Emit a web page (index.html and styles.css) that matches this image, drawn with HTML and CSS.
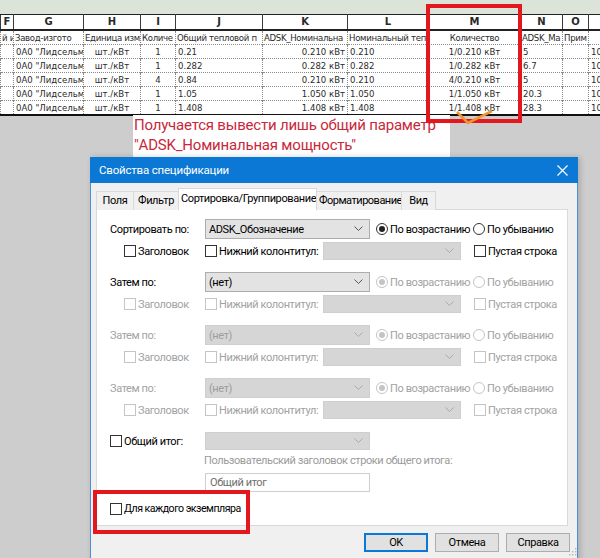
FILE: index.html
```html
<!DOCTYPE html>
<html lang="ru">
<head>
<meta charset="utf-8">
<title>Свойства спецификации</title>
<link rel="stylesheet" href="styles.css">
</head>
<body>
<div class="sheet">
  <div class="band"></div>
  <table class="sched">
    <colgroup>
      <col class="w13"><col class="w70"><col class="w57"><col class="w35"><col class="w87"><col class="w85"><col class="w81"><col class="w92"><col class="w42"><col class="w26"><col class="w12">
    </colgroup>
    <tr class="letters"><td>F</td><td>G</td><td>H</td><td>I</td><td>J</td><td>K</td><td>L</td><td>M</td><td>N</td><td>O</td><td></td></tr>
    <tr class="names"><td>й и</td><td>Завод-изгото</td><td>Единица изм</td><td>Количе</td><td>Общий тепловой п</td><td>ADSK_Номинальна</td><td>Номинальный теп</td><td class="c">Количество</td><td>ADSK_Ма</td><td>Прим</td><td></td></tr>
    <tr><td></td><td>0A0 "Лидсельм</td><td class="c">шт./кВт</td><td class="c">1</td><td>0.21</td><td class="r">0.210 кВт</td><td>0.210</td><td class="c">1/0.210 кВт</td><td>5</td><td></td><td>10</td></tr>
    <tr><td></td><td>0A0 "Лидсельм</td><td class="c">шт./кВт</td><td class="c">1</td><td>0.282</td><td class="r">0.282 кВт</td><td>0.282</td><td class="c">1/0.282 кВт</td><td>6.7</td><td></td><td>10</td></tr>
    <tr><td></td><td>0A0 "Лидсельм</td><td class="c">шт./кВт</td><td class="c">4</td><td>0.84</td><td class="r">0.210 кВт</td><td>0.210</td><td class="c">4/0.210 кВт</td><td>5</td><td></td><td>10</td></tr>
    <tr><td></td><td>0A0 "Лидсельм</td><td class="c">шт./кВт</td><td class="c">1</td><td>1.05</td><td class="r">1.050 кВт</td><td>1.050</td><td class="c">1/1.050 кВт</td><td>20.3</td><td></td><td>10</td></tr>
    <tr class="last"><td></td><td>0A0 "Лидсельм</td><td class="c">шт./кВт</td><td class="c">1</td><td>1.408</td><td class="r">1.408 кВт</td><td>1.408</td><td class="c">1/1.408 кВт</td><td>28.3</td><td></td><td>10</td></tr>
  </table>
</div>

<div class="note">Получается вывести лишь общий параметр<br>"ADSK_Номинальная мощность"</div>
<div class="hl hl-col"></div>
<svg class="tick" width="44" height="16" viewBox="0 0 44 16"><polyline points="2,2 13,13 37,1" fill="none" stroke="#f0952f" stroke-width="2.6"/></svg>

<div class="dialog">
  <div class="titlebar">
    <span class="title">Свойства спецификации</span>
    <svg class="close" width="11" height="11" viewBox="0 0 11 11"><path d="M0.5 0.5L10.5 10.5M10.5 0.5L0.5 10.5" stroke="#fff" stroke-width="1.2"/></svg>
  </div>
  <div class="tabs">
    <div class="tab">Поля</div>
    <div class="tab">Фильтр</div>
    <div class="tab active">Сортировка/Группирование</div>
    <div class="tab">Форматирование</div>
    <div class="tab">Вид</div>
  </div>
  <div class="panel">
    <div class="group">
      <div class="rowa">
        <span class="lbl">Сортировать по:</span>
        <div class="cb"><span>ADSK_Обозначение</span><svg class="chev" width="9" height="6" viewBox="0 0 9 6"><polyline points="0.5,0.5 4.5,4.5 8.5,0.5" fill="none" stroke="#555"/></svg></div>
        <span class="opt asc"><span class="radio on"></span>По возрастанию</span>
        <span class="opt"><span class="radio"></span>По убыванию</span>
      </div>
      <div class="rowb">
        <span class="opt hdr"><span class="chk"></span>Заголовок</span>
        <span class="opt ftr"><span class="chk"></span>Нижний колонтитул:</span>
        <div class="cb sm off"><span></span><svg class="chev" width="9" height="6" viewBox="0 0 9 6"><polyline points="0.5,0.5 4.5,4.5 8.5,0.5" fill="none" stroke="#aaa"/></svg></div>
        <span class="opt blank"><span class="chk"></span>Пустая строка</span>
      </div>
    </div>
    <div class="group">
      <div class="rowa">
        <span class="lbl">Затем по:</span>
        <div class="cb"><span>(нет)</span><svg class="chev" width="9" height="6" viewBox="0 0 9 6"><polyline points="0.5,0.5 4.5,4.5 8.5,0.5" fill="none" stroke="#555"/></svg></div>
        <span class="opt asc dis"><span class="radio on"></span>По возрастанию</span>
        <span class="opt dis"><span class="radio"></span>По убыванию</span>
      </div>
      <div class="rowb dis">
        <span class="opt hdr"><span class="chk"></span>Заголовок</span>
        <span class="opt ftr"><span class="chk"></span>Нижний колонтитул:</span>
        <div class="cb sm off"><span></span><svg class="chev" width="9" height="6" viewBox="0 0 9 6"><polyline points="0.5,0.5 4.5,4.5 8.5,0.5" fill="none" stroke="#aaa"/></svg></div>
        <span class="opt blank"><span class="chk"></span>Пустая строка</span>
      </div>
    </div>
    <div class="group">
      <div class="rowa dis">
        <span class="lbl">Затем по:</span>
        <div class="cb off"><span>(нет)</span><svg class="chev" width="9" height="6" viewBox="0 0 9 6"><polyline points="0.5,0.5 4.5,4.5 8.5,0.5" fill="none" stroke="#aaa"/></svg></div>
        <span class="opt asc"><span class="radio on"></span>По возрастанию</span>
        <span class="opt"><span class="radio"></span>По убыванию</span>
      </div>
      <div class="rowb dis">
        <span class="opt hdr"><span class="chk"></span>Заголовок</span>
        <span class="opt ftr"><span class="chk"></span>Нижний колонтитул:</span>
        <div class="cb sm off"><span></span><svg class="chev" width="9" height="6" viewBox="0 0 9 6"><polyline points="0.5,0.5 4.5,4.5 8.5,0.5" fill="none" stroke="#aaa"/></svg></div>
        <span class="opt blank"><span class="chk"></span>Пустая строка</span>
      </div>
    </div>
    <div class="group">
      <div class="rowa dis">
        <span class="lbl">Затем по:</span>
        <div class="cb off"><span>(нет)</span><svg class="chev" width="9" height="6" viewBox="0 0 9 6"><polyline points="0.5,0.5 4.5,4.5 8.5,0.5" fill="none" stroke="#aaa"/></svg></div>
        <span class="opt asc"><span class="radio on"></span>По возрастанию</span>
        <span class="opt"><span class="radio"></span>По убыванию</span>
      </div>
      <div class="rowb dis">
        <span class="opt hdr"><span class="chk"></span>Заголовок</span>
        <span class="opt ftr"><span class="chk"></span>Нижний колонтитул:</span>
        <div class="cb sm off"><span></span><svg class="chev" width="9" height="6" viewBox="0 0 9 6"><polyline points="0.5,0.5 4.5,4.5 8.5,0.5" fill="none" stroke="#aaa"/></svg></div>
        <span class="opt blank"><span class="chk"></span>Пустая строка</span>
      </div>
    </div>
    <div class="total">
      <span class="opt lbl"><span class="chk"></span>Общий итог:</span>
      <div class="cb sm off"><span></span><svg class="chev" width="9" height="6" viewBox="0 0 9 6"><polyline points="0.5,0.5 4.5,4.5 8.5,0.5" fill="none" stroke="#aaa"/></svg></div>
    </div>
    <div class="caption">Пользовательский заголовок строки общего итога:</div>
    <div class="inputrow"><div class="input">Общий итог</div></div>
    <div class="each"><span class="opt"><span class="chk"></span>Для каждого экземпляра</span></div>
  </div>
  <div class="buttons">
    <div class="btn default">OK</div>
    <div class="btn">Отмена</div>
    <div class="btn">Справка</div>
  </div>
  <svg class="grip" width="8" height="8" viewBox="0 0 8 8"><g fill="#b5b5b5"><rect x="6" y="0" width="1.4" height="1.4"/><rect x="3" y="3" width="1.4" height="1.4"/><rect x="6" y="3" width="1.4" height="1.4"/><rect x="0" y="6" width="1.4" height="1.4"/><rect x="3" y="6" width="1.4" height="1.4"/><rect x="6" y="6" width="1.4" height="1.4"/></g></svg>
</div>
<div class="hl hl-each"></div>
</body>
</html>
```
FILE: styles.css
```css
* { box-sizing: border-box; }
html, body { margin: 0; padding: 0; }
body {
  width: 600px;
  height: 558px;
  overflow: hidden;
  background: #cdcdcd;
  position: relative;
  font-family: Roboto, "Noto Sans", sans-serif;
}

/* ---------- schedule table ---------- */
.band { height: 14px; background: #dce3d8; }
.sched {
  border-collapse: collapse;
  table-layout: fixed;
  width: 600px;
  background: #fff;
  font-family: "DejaVu Sans Condensed", "DejaVu Sans", sans-serif;
  font-size: 9.5px;
  color: #2a2a2a;
}
.w13 { width: 13px; } .w70 { width: 70px; } .w57 { width: 57px; } .w35 { width: 35px; }
.w87 { width: 87px; } .w85 { width: 85px; } .w81 { width: 81px; } .w92 { width: 92px; }
.w42 { width: 42px; } .w26 { width: 26px; } .w12 { width: 12px; }
.sched td {
  height: 14px;
  padding: 0 2px;
  line-height: 13px;
  white-space: nowrap;
  overflow: hidden;
  border-left: 1px dotted #8a8a8a;
  border-top: 1px dotted #8a8a8a;
}
.sched tr.names td { letter-spacing: -0.3px; padding: 0 1px; }
.sched td.c { text-align: center; }
.sched td.r { text-align: right; }
.sched tr.letters td {
  height: 15px;
  font-family: "DejaVu Sans", sans-serif;
  font-weight: bold;
  font-size: 10px;
  text-align: center;
  border: 1px solid #3a3a3a;
  border-top: 1px solid #222;
  border-bottom: 2px solid #222;
}
.sched tr.last td { border-bottom: 2px solid #111; }

/* ---------- annotations ---------- */
.note {
  position: absolute;
  left: 133px;
  top: 115px;
  width: 317px;
  height: 44px;
  background: #fff;
  padding-left: 1px;
  color: #c8283a;
  font-size: 15px;
  letter-spacing: -0.2px;
  line-height: 20px;
  white-space: nowrap;
}
.hl {
  position: absolute;
  border: 4px solid #e3181f;
}
.hl-col { left: 426px; top: 4px; width: 96px; height: 119px; }
.hl-each { left: 93px; top: 490px; width: 157px; height: 44px; }
.tick { position: absolute; left: 455px; top: 110px; }

/* ---------- dialog ---------- */
.dialog {
  position: absolute;
  left: 90px;
  top: 157px;
  width: 488px;
  height: 420px;
  background: #f0f0f0;
  border: 1px solid #4d8fd6;
  border-top: none;
  box-shadow: 2px 0 6px rgba(0,0,0,0.18);
  font-size: 11px;
  letter-spacing: -0.4px;
  color: #000;
}
.titlebar {
  height: 26px;
  margin: 0 -1px;
  background: #0a78d4;
  color: #fff;
  display: flex;
  align-items: center;
  justify-content: space-between;
  padding: 0 9px 0 9px;
  font-size: 11.5px;
  letter-spacing: -0.2px;
}
.close { margin-right: 1px; }

.tabs {
  display: flex;
  align-items: flex-end;
  height: 26px;
  padding: 5px 0 0 5px;
  white-space: nowrap;
}
.tab {
  height: 19px;
  padding: 0 2px;
  border: 1px solid #d9d9d9;
  border-right: none;
  border-bottom: none;
  background: #f0f0f0;
  line-height: 18px;
  margin-bottom: -1px;
  overflow: hidden;
  text-align: center;
}
.tab:last-child { border-right: 1px solid #d9d9d9; }
.tab.active {
  height: 22px;
  background: #fff;
  border: 1px solid #d9d9d9;
  border-bottom: none;
  line-height: 20px;
  position: relative;
  z-index: 1;
  margin-bottom: -1px;
}
.tab:first-child { width: 37px; }
.tab:nth-child(2) { width: 45px; }
.tab.active { width: 139px; }
.tab:nth-child(4) { width: 84px; border-left: none; letter-spacing: -0.5px; }
.tab:nth-child(5) { width: 35px; }

.panel {
  margin-left: 5px;
  width: 472px;
  height: 317px;
  background: #fff;
  border: 1px solid #d9d9d9;
  padding: 8px 0 0 13px;
  white-space: nowrap;
}
.group { margin-bottom: 9px; }
.rowa, .rowb, .total {
  display: flex;
  align-items: center;
  height: 22px;
}
.rowb { padding-left: 14px; }
.lbl { width: 95px; flex: none; }
.opt { display: flex; align-items: center; white-space: nowrap; flex: none; }
.asc { margin-left: 6px; width: 97px; }
.hdr { width: 81px; }
.ftr { width: 118px; }
.blank { margin-left: 13px; }
.dis, .dis .lbl { color: #a2a2a2; }
.opt.dis { color: #a2a2a2; }

.cb {
  flex: none;
  width: 165px;
  height: 20px;
  background: #e3e3e3;
  border: 1px solid #adadad;
  display: flex;
  align-items: center;
  justify-content: space-between;
  padding: 0 6px 0 3px;
}
.cb.sm { width: 138px; height: 18px; }
.total .cb.sm { width: 165px; }
.cb.off { background: #d6d6d6; border-color: #cfcfcf; color: #9d9d9d; }

.radio {
  width: 12px;
  height: 12px;
  border: 1px solid #333;
  border-radius: 50%;
  margin-right: 2px;
  background: #fff;
  position: relative;
  flex: none;
}
.radio.on::after {
  content: "";
  position: absolute;
  left: 2px;
  top: 2px;
  width: 6px;
  height: 6px;
  border-radius: 50%;
  background: #222;
}
.chk {
  width: 12px;
  height: 12px;
  border: 1px solid #333;
  background: #fff;
  margin-right: 2px;
  flex: none;
}
.dis .radio, .dis .chk { border-color: #c4c4c4; }
.dis .radio.on::after { background: #c4c4c4; }

.total { margin-top: 1px; }
.total .lbl { width: 95px; }
.caption {
  height: 18px;
  line-height: 18px;
  margin-left: 94px;
  color: #9a9a9a;
}
.inputrow { margin: 3px 0 0 95px; }
.input {
  width: 165px;
  height: 19px;
  border: 1px solid #cfcfcf;
  background: #fff;
  color: #6e6e6e;
  padding-left: 4px;
  line-height: 17px;
}
.each {
  margin-top: 7px;
  height: 19px;
  display: flex;
  align-items: center;
  font-size: 10.6px;
  letter-spacing: -0.5px;
}

.buttons {
  display: flex;
  justify-content: flex-end;
  gap: 7px;
  padding: 7px 7px 0 0;
}
.btn {
  width: 64px;
  height: 19px;
  background: #e1e1e1;
  border: 1px solid #adadad;
  text-align: center;
  line-height: 17px;
}
.btn.default { border: 2px solid #0a78d4; line-height: 15px; }
.grip { position: absolute; left: 478px; top: 391px; }
```
